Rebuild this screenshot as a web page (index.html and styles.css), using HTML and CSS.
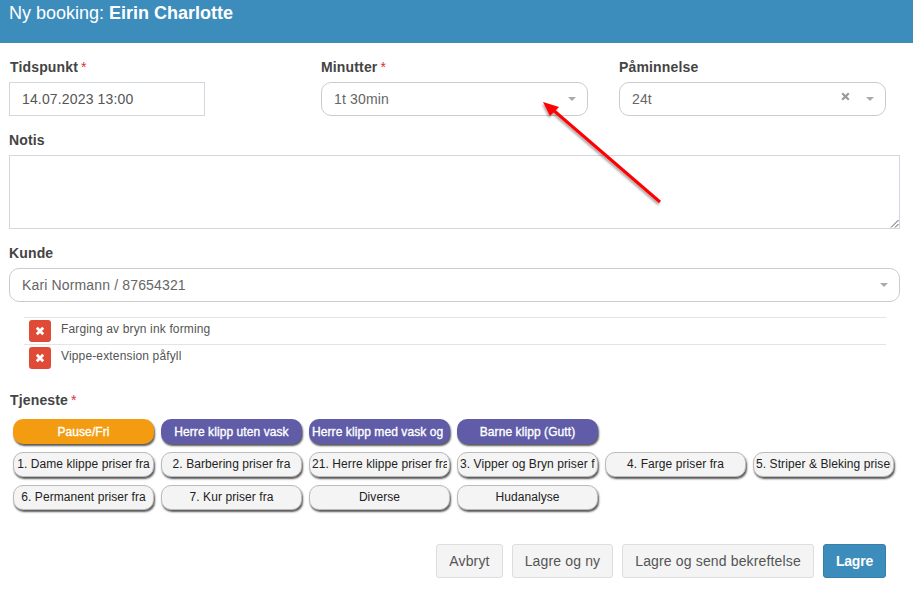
FILE: index.html
```html
<!DOCTYPE html>
<html lang="no">
<head>
<meta charset="utf-8">
<title>Ny booking</title>
<link rel="stylesheet" href="styles.css">
</head>
<body>
<header class="head">Ny booking: <b>Eirin Charlotte</b></header>
<main class="form">
  <div class="top-row">
    <div class="field">
      <label class="lbl">Tidspunkt<span class="req">*</span></label>
      <div class="input">14.07.2023 13:00</div>
    </div>
    <div class="field">
      <label class="lbl">Minutter<span class="req">*</span></label>
      <div class="select"><span class="val">1t 30min</span><span class="caret"></span></div>
    </div>
    <div class="field">
      <label class="lbl">Påminnelse</label>
      <div class="select"><span class="val">24t</span>
        <svg class="clear" width="9" height="9" viewBox="0 0 9 9"><path d="M1.2 1.2l6.6 6.6M7.8 1.2l-6.6 6.6" stroke="#999" stroke-width="2.2"/></svg>
        <span class="caret"></span></div>
    </div>
  </div>
  <label class="lbl">Notis</label>
  <div class="textarea">
    <svg class="grip" width="9" height="9" viewBox="0 0 9 9"><path d="M1 8.5L8.5 1M5 8.5L8.5 5" stroke="#555" stroke-width="1"/></svg>
  </div>
  <label class="lbl">Kunde</label>
  <div class="select"><span class="val">Kari Normann / 87654321</span><span class="caret"></span></div>
  <ul class="items">
    <li class="item"><span class="del"><svg width="10" height="10" viewBox="0 0 10 10"><path d="M1.8 1.8l6.4 6.4M8.2 1.8l-6.4 6.4" stroke="#fff" stroke-width="2.8"/></svg></span><span>Farging av bryn ink forming</span></li>
    <li class="item"><span class="del"><svg width="10" height="10" viewBox="0 0 10 10"><path d="M1.8 1.8l6.4 6.4M8.2 1.8l-6.4 6.4" stroke="#fff" stroke-width="2.8"/></svg></span><span>Vippe-extension påfyll</span></li>
  </ul>
  <label class="lbl">Tjeneste<span class="req">*</span></label>
  <div class="services">
    <button class="svc orange"><span>Pause/Fri</span></button>
    <button class="svc purple"><span>Herre klipp uten vask</span></button>
    <button class="svc purple flush"><span>Herre klipp med vask og</span></button>
    <button class="svc purple"><span>Barne klipp (Gutt)</span></button>
    <span class="svc-gap"></span><span class="svc-gap"></span>
    <button class="svc"><span>1. Dame klippe priser fra</span></button>
    <button class="svc"><span>2. Barbering priser fra</span></button>
    <button class="svc"><span>21. Herre klippe priser fra</span></button>
    <button class="svc"><span>3. Vipper og Bryn priser fra</span></button>
    <button class="svc"><span>4. Farge priser fra</span></button>
    <button class="svc"><span>5. Striper &amp; Bleking priser fra</span></button>
    <button class="svc"><span>6. Permanent priser fra</span></button>
    <button class="svc"><span>7. Kur priser fra</span></button>
    <button class="svc"><span>Diverse</span></button>
    <button class="svc"><span>Hudanalyse</span></button>
  </div>
  <div class="actions">
    <button class="btn">Avbryt</button>
    <button class="btn">Lagre og ny</button>
    <button class="btn">Lagre og send bekreftelse</button>
    <button class="btn primary">Lagre</button>
  </div>
</main>
<svg class="arrow" width="913" height="590" viewBox="0 0 913 590">
  <defs><filter id="sh" x="-20%" y="-20%" width="140%" height="140%"><feDropShadow dx="-1" dy="2" stdDeviation="1.2" flood-color="#000" flood-opacity="0.35"/></filter></defs>
  <g filter="url(#sh)">
    <path d="M660 202L552 109" stroke="#f00" stroke-width="3" fill="none"/>
    <path d="M543 102L559 107L550 116Z" fill="#f00"/>
  </g>
</svg>
</body>
</html>
```

FILE: styles.css
```css
* { box-sizing: border-box; }
html, body { margin: 0; padding: 0; }
body {
  width: 913px;
  height: 590px;
  overflow: hidden;
  position: relative;
  background: #fff;
  font-family: "Liberation Sans", Arial, sans-serif;
  font-size: 14px;
  color: #555;
}
.head {
  height: 43px;
  background: #3c8dbc;
  color: #fff;
  font-size: 18px;
  line-height: 26px;
  padding-left: 9px;
}
.form {
  padding: 17px 13px 0 9px;
  display: flex;
  flex-direction: column;
  letter-spacing: 0.15px;
}
.top-row {
  display: flex;
  margin-bottom: 17px;
}
.field { display: flex; flex-direction: column; }
.field:nth-child(1) { width: 196px; margin-right: 116px; }
.field:nth-child(2) { width: 267px; margin-right: 31px; }
.field:nth-child(3) { width: 267px; }
.lbl {
  display: block;
  height: 14px;
  line-height: 14px;
  margin-bottom: 8px;
  font-weight: bold;
  font-size: 14px;
  letter-spacing: 0.15px;
  color: #444;
}
.field:first-child .lbl { padding-left: 1px; }
.req { color: #e03030; font-weight: normal; margin-left: 3px; }
.input {
  height: 34px;
  border: 1px solid #d2d6de;
  padding: 0 12px;
  line-height: 32px;
  color: #555;
}
.select {
  height: 34px;
  border: 1px solid #ccc;
  border-radius: 10px;
  padding: 0 7px 0 12px;
  display: flex;
  align-items: center;
  color: #666;
}
.val { flex: 1; }
.caret {
  width: 0;
  height: 0;
  margin-right: 4px;
  border-left: 4px solid transparent;
  border-right: 4px solid transparent;
  border-top: 4px solid #aaa;
}
.clear { margin: -5px 16px 0 0; }
.textarea {
  position: relative;
  height: 74px;
  border: 1px solid #d2d6de;
  margin-bottom: 17px;
}
.grip { position: absolute; right: 0; bottom: 0; }
.items {
  list-style: none;
  margin: 15px 0 0 15px;
  padding: 0;
  width: 862px;
}
.item {
  height: 27px;
  border-top: 1px solid #e4e4e4;
  padding: 2px 0 0 5px;
  display: flex;
  font-size: 12px;
  line-height: 18px;
  color: #555;
}
.del {
  width: 22px;
  height: 22px;
  margin-right: 10px;
  background: #e04b38;
  border-radius: 3px;
  display: flex;
  align-items: center;
  justify-content: center;
}
.items + .lbl { margin-top: 22px; margin-bottom: 12px; padding-left: 1px; }
.services {
  display: grid;
  grid-template-columns: repeat(6, 141px);
  column-gap: 7px;
  row-gap: 8px;
  padding-left: 4px;
}
.svc {
  height: 25px;
  padding: 0 2px 1px;
  border: 1px solid #bbb;
  border-radius: 10px;
  background: #f4f4f4;
  color: #222;
  font: 12px/22px "Liberation Sans", Arial, sans-serif;
  letter-spacing: 0.08px;
  text-align: center;
  box-shadow: 1px 2px 2px rgba(0, 0, 0, 0.65);
}
.svc span {
  display: block;
  white-space: nowrap;
  overflow: hidden;
}
.orange, .purple {
  padding: 0 2px;
  color: #fff;
  border: 0;
  -webkit-text-stroke: 0.35px #fff;
}
.orange { background: #f39c12; }
.purple { background: #605ca8; }
.flush { padding-left: 3px; text-align: left; }
.actions {
  margin-top: 34px;
  display: flex;
  justify-content: flex-end;
  gap: 9px;
  padding-right: 14px;
}
.btn {
  height: 34px;
  padding: 0 12px;
  border: 1px solid #ddd;
  border-radius: 3px;
  background: #f4f4f4;
  color: #555;
  font: 14px "Liberation Sans", Arial, sans-serif;
  letter-spacing: 0.15px;
}
.primary {
  background: #3c8dbc;
  border-color: #367fa9;
  color: #fff;
  font-weight: bold;
  letter-spacing: -0.2px;
}
.arrow { position: absolute; left: 0; top: 0; pointer-events: none; }
```
